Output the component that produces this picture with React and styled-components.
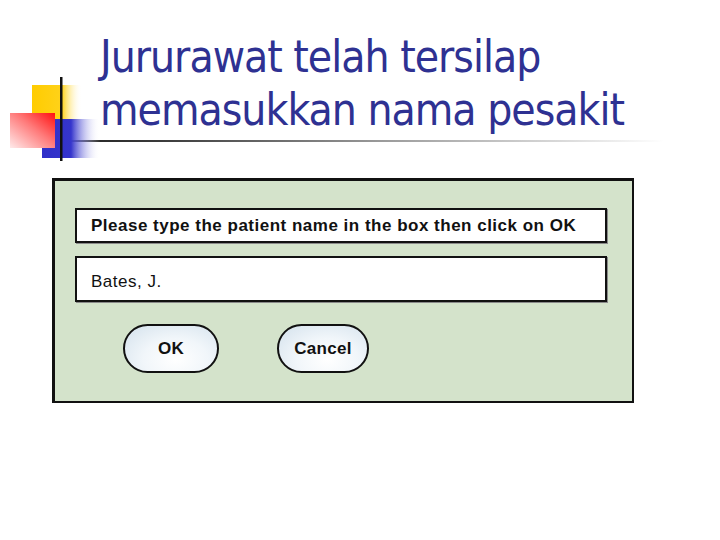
import React from "react";
import styled, { createGlobalStyle } from "styled-components";

const Global = createGlobalStyle`
  html, body { margin: 0; padding: 0; background: #ffffff; }
  #root { width: 720px; height: 540px; }
`;

const Page = styled.div`
  position: relative;
  width: 720px;
  height: 540px;
  background: #ffffff;
  overflow: hidden;
  display: flex;
  flex-direction: column;
`;

const TitleBlock = styled.header`
  padding: 30px 0 0 100px;
`;

const Title = styled.h1`
  margin: 0;
  font-family: "DejaVu Sans Condensed", "DejaVu Sans", sans-serif;
  font-stretch: condensed;
  font-weight: normal;
  font-size: 44px;
  line-height: 53px;
  letter-spacing: -1px;
  color: #2e3192;
  white-space: nowrap;
`;

const Rule = styled.div`
  margin: 4px 0 0 34px;
  width: 630px;
  height: 2px;
  background: linear-gradient(to right, #1a1a1a 0%, #3a3a3a 20%, #9a9a9a 55%, #dcdcdc 85%, rgba(255,255,255,0) 100%);
`;

const LogoMark = styled.svg`
  position: absolute;
  left: 10px;
  top: 77px;
  width: 92px;
  height: 84px;
`;

const Dialog = styled.section`
  box-sizing: border-box;
  margin: 36px 0 0 52px;
  width: 582px;
  background: #d4e3cb;
  border-style: solid;
  border-color: #111111;
  border-width: 3px 2px 2px 3px;
  padding: 27px 25px 28px 20px;
  display: flex;
  flex-direction: column;
`;

const Field = styled.div`
  box-sizing: border-box;
  height: ${(p) => p.$h}px;
  margin-top: ${(p) => p.$mt || 0}px;
  background: #ffffff;
  border: 2px solid #111111;
  box-shadow: 1px 1px 0 #8a8a8a;
  display: flex;
  align-items: center;
  padding: ${(p) => p.$pt || 0}px 0 0 14px;
  font-family: "Liberation Sans", Arial, sans-serif;
  font-size: 17px;
  letter-spacing: 0.5px;
  font-weight: ${(p) => (p.$bold ? 700 : 400)};
  color: #111111;
`;

const ButtonRow = styled.div`
  display: flex;
  gap: 58px;
  margin-top: 22px;
  padding-left: 48px;
`;

const PillButton = styled.button`
  box-sizing: border-box;
  width: ${(p) => p.$w}px;
  height: 49px;
  border: 2px solid #111111;
  border-radius: 25px;
  background: radial-gradient(ellipse at 55% 75%, #ffffff 0%, #f1f6fa 45%, #d3e1ec 100%);
  font-family: "Liberation Sans", Arial, sans-serif;
  font-size: 17px;
  font-weight: 700;
  letter-spacing: 0.3px;
  color: #111111;
  padding: 0;
  cursor: pointer;
`;

function Logo() {
  return (
    <LogoMark viewBox="0 0 92 84">
      <defs>
        <linearGradient id="yel" x1="0" y1="0" x2="1" y2="0">
          <stop offset="0" stopColor="#ffcc00" />
          <stop offset="0.6" stopColor="#ffd21a" />
          <stop offset="1" stopColor="#ffffff" stopOpacity="0" />
        </linearGradient>
        <linearGradient id="blu" x1="0" y1="0" x2="1" y2="0">
          <stop offset="0" stopColor="#2f2fc8" />
          <stop offset="0.5" stopColor="#3535cc" />
          <stop offset="1" stopColor="#ffffff" stopOpacity="0" />
        </linearGradient>
        <linearGradient id="red" x1="1" y1="0" x2="0" y2="1">
          <stop offset="0" stopColor="#ff1010" />
          <stop offset="0.45" stopColor="#ff7a7a" />
          <stop offset="1" stopColor="#ffeaea" />
        </linearGradient>
      </defs>
      <rect x="22" y="8" width="50" height="36" fill="url(#yel)" />
      <rect x="32" y="42" width="58" height="39" fill="url(#blu)" />
      <rect x="0" y="36" width="45" height="35" fill="url(#red)" />
      <rect x="50" y="0" width="2.5" height="84" fill="#111111" />
    </LogoMark>
  );
}

export default function App() {
  return (
    <>
      <Global />
      <Page>
        <TitleBlock>
          <Title>
            Jururawat telah tersilap
            <br />
            memasukkan nama pesakit
          </Title>
        </TitleBlock>
        <Rule />
        <Logo />
        <Dialog>
          <Field $h={35} $bold>
            Please type the patient name in the box then click on OK
          </Field>
          <Field $h={46} $mt={13} $pt={6}>
            Bates, J.
          </Field>
          <ButtonRow>
            <PillButton $w={96}>OK</PillButton>
            <PillButton $w={92}>Cancel</PillButton>
          </ButtonRow>
        </Dialog>
      </Page>
    </>
  );
}
